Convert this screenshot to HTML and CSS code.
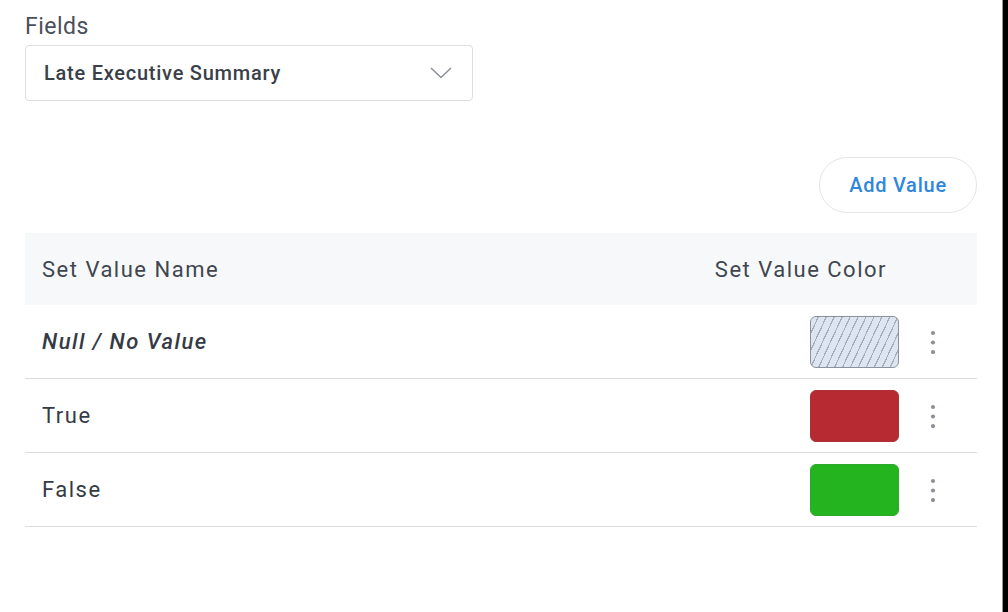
FILE: index.html
```html
<!DOCTYPE html>
<html lang="en">
<head>
    <meta charset="UTF-8">
    <title>Set Values</title>
    <link rel="stylesheet" href="styles.css">
</head>
<body>
    <div class="page">
        <div class="content">
            <div class="field-label">Fields</div>
            <div class="select">
                <span>Late Executive Summary</span>
                <svg class="chevron" width="22" height="12" viewBox="0 0 22 12">
                    <path d="M1 1 L11 10.5 L21 1" fill="none" stroke="#8d939b" stroke-width="1.6"/>
                </svg>
            </div>

            <div class="actions">
                <button class="btn-add">Add Value</button>
            </div>

            <div class="table">
                <div class="table-head">
                    <span>Set Value Name</span>
                    <span>Set Value Color</span>
                </div>
                <div class="row">
                    <span class="name null">Null / No Value</span>
                    <div class="swatch hatch"></div>
                    <svg class="kebab" width="24" height="24" viewBox="0 0 24 24">
                        <circle cx="12" cy="3" r="2.1"/>
                        <circle cx="12" cy="12.5" r="2.1"/>
                        <circle cx="12" cy="22" r="2.1"/>
                    </svg>
                </div>
                <div class="row">
                    <span class="name">True</span>
                    <div class="swatch red"></div>
                    <svg class="kebab" width="24" height="24" viewBox="0 0 24 24">
                        <circle cx="12" cy="3" r="2.1"/>
                        <circle cx="12" cy="12.5" r="2.1"/>
                        <circle cx="12" cy="22" r="2.1"/>
                    </svg>
                </div>
                <div class="row">
                    <span class="name">False</span>
                    <div class="swatch green"></div>
                    <svg class="kebab" width="24" height="24" viewBox="0 0 24 24">
                        <circle cx="12" cy="3" r="2.1"/>
                        <circle cx="12" cy="12.5" r="2.1"/>
                        <circle cx="12" cy="22" r="2.1"/>
                    </svg>
                </div>
            </div>
        </div>
        <div class="edge"></div>
    </div>
</body>
</html>
```

FILE: styles.css
```css
body {
    margin: 0;
    font-family: Roboto, 'Liberation Sans', sans-serif;
    color: #353b45;
    background: white;
}

.page {
    display: flex;
    height: 612px;
}

.content {
    flex: 1;
    padding: 13px 25px 0 25px;
}

.edge {
    width: 5px;
    background: #000;
    border-left: 1px solid #9a9a9a;
}

.field-label {
    font-size: 23px;
    line-height: 28px;
    letter-spacing: 0.5px;
    color: #4a5059;
    margin-bottom: 4px;
}

.select {
    width: 448px;
    height: 56px;
    box-sizing: border-box;
    border: 1px solid #dcdee2;
    border-radius: 4px;
    display: flex;
    align-items: center;
    justify-content: space-between;
    padding: 0 20px 0 18px;
    font-size: 20px;
    font-weight: 500;
    letter-spacing: 0.75px;
    color: #3a4049;
}

.actions {
    display: flex;
    justify-content: flex-end;
    margin-top: 56px;
}

.btn-add {
    width: 158px;
    height: 56px;
    border: 1px solid #e3e5e8;
    border-radius: 28px;
    background: white;
    color: #2f87dc;
    font-family: inherit;
    font-size: 20px;
    font-weight: 500;
    letter-spacing: 0.75px;
    cursor: pointer;
}

.table {
    margin-top: 20px;
}

.table-head {
    height: 72px;
    background: #f7f8fa;
    display: flex;
    align-items: center;
    justify-content: space-between;
    padding: 0 90px 0 17px;
    font-size: 22px;
    letter-spacing: 1.5px;
    color: #3f4650;
}

.row {
    height: 73px;
    border-bottom: 1px solid #dadce0;
    display: flex;
    align-items: center;
    padding: 0 32px 0 17px;
    font-size: 22px;
    letter-spacing: 1.5px;
}

.name {
    flex: 1;
}

.name.null {
    font-style: italic;
    font-weight: 500;
}

.swatch {
    width: 89px;
    height: 52px;
    box-sizing: border-box;
    border-radius: 6px;
    margin-right: 22px;
}

.hatch {
    border: 1.5px solid #8c929b;
    background: repeating-linear-gradient(115deg, #dde5f0 0, #dde5f0 6px, #a3aebd 6px, #a3aebd 7.2px);
}

.red {
    background: #b82a31;
    border: 1px solid #a8343a;
}

.green {
    background: #24b420;
    border: 1px solid #2fa82b;
}

.kebab {
    fill: #8c9199;
}
```
